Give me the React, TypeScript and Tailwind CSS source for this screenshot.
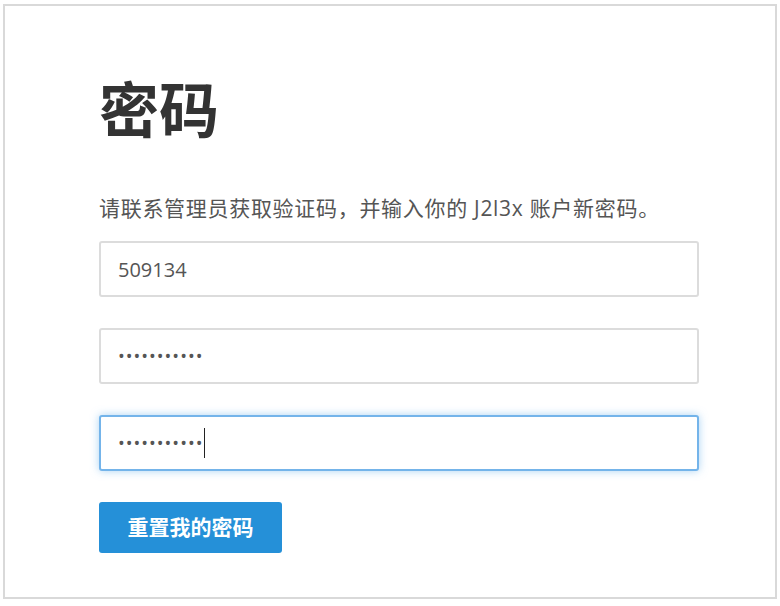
import { useEffect, useRef } from "react";

const font = { fontFamily: '"Open Sans", "Noto Sans CJK SC", sans-serif' };

export default function App() {
  const lastRef = useRef<HTMLInputElement>(null);

  useEffect(() => {
    const el = lastRef.current;
    if (el) {
      el.focus();
      el.setSelectionRange(el.value.length, el.value.length);
    }
  }, []);

  return (
    <div className="min-h-screen bg-white pl-[3px] pt-[4px]" style={font}>
      <div className="w-[774px] h-[595px] border-2 border-[#d9d9d9] bg-white pl-[94px] pr-[76px] pt-[68px]">
        {/* Heading */}
        <h1 className="text-[60px] leading-[72px] font-bold text-[#333]">密码</h1>

        <p className="mt-[48px] text-[21px] leading-[28px] text-[#555] tracking-[0.7px]">
          请联系管理员获取验证码，并输入你的 J2l3x 账户新密码。
        </p>

        <form className="mt-[19px] flex flex-col gap-[31px]" onSubmit={(e) => e.preventDefault()}>
          <input
            type="text"
            defaultValue="509134"
            className="w-[600px] h-[56px] rounded-[3px] border-2 border-[#dcdcdc] bg-white px-[17px] text-[20px] text-[#555] outline-none"
          />
          <input
            type="password"
            defaultValue="12345678901"
            className="w-[600px] h-[56px] rounded-[3px] border-2 border-[#dcdcdc] bg-white px-[17px] text-[18px] tracking-[1px] text-[#555] outline-none"
          />
          <div className="relative w-[600px] h-[56px]">
            <input
              ref={lastRef}
              type="password"
              defaultValue="12345678901"
              className="w-full h-full rounded-[3px] border-2 border-[#74b4ea] bg-white px-[17px] text-[18px] tracking-[1px] text-[#555] caret-transparent outline-none shadow-[0_0_8px_rgba(102,175,233,0.55)]"
            />
            {/* text caret */}
            <span className="absolute left-[105px] top-[13px] w-px h-[30px] bg-[#222]" />
          </div>

          <button
            type="submit"
            className="w-[183px] h-[51px] rounded-[3px] bg-[#2590d8] text-white text-[21px] font-semibold"
          >
            重置我的密码
          </button>
        </form>
      </div>
    </div>
  );
}
